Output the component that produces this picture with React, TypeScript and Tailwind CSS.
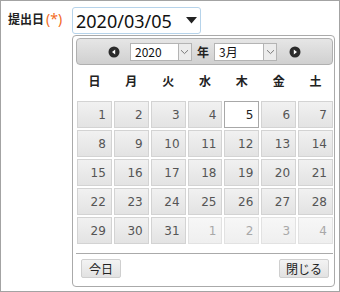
import React from 'react';

// --- Calendar data (March 2020) ---
const weekDays = ['日', '月', '火', '水', '木', '金', '土'];

type Day = { n: number; other?: boolean; selected?: boolean };

const weeks: Day[][] = [
  [1, 2, 3, 4, 5, 6, 7].map((n) => ({ n, selected: n === 5 })),
  [8, 9, 10, 11, 12, 13, 14].map((n) => ({ n })),
  [15, 16, 17, 18, 19, 20, 21].map((n) => ({ n })),
  [22, 23, 24, 25, 26, 27, 28].map((n) => ({ n })),
  [
    { n: 29 },
    { n: 30 },
    { n: 31 },
    { n: 1, other: true },
    { n: 2, other: true },
    { n: 3, other: true },
    { n: 4, other: true },
  ],
];

const jp = "font-['Noto_Sans_CJK_JP',sans-serif]";

const CircleArrow = ({ dir }: { dir: 'prev' | 'next' }) => (
  <svg width="12" height="12" viewBox="0 0 12 12">
    <circle cx="6" cy="6" r="5.5" fill="#2b2b2b" />
    {dir === 'prev' ? (
      <path d="M7.2 3.4 L4 6 L7.2 8.6 Z" fill="#fff" />
    ) : (
      <path d="M4.8 3.4 L8 6 L4.8 8.6 Z" fill="#fff" />
    )}
  </svg>
);

const Chevron = () => (
  <span className="flex items-center justify-center w-[13px] h-full border-l border-[#b4b4b4] bg-[#ececec]">
    <svg width="9" height="6" viewBox="0 0 9 6">
      <path d="M1 1.2 L4.5 4.6 L8 1.2" fill="none" stroke="#7a7a7a" strokeWidth="1" />
    </svg>
  </span>
);

const MiniSelect = ({ value, width }: { value: string; width: string }) => (
  <div className={`flex items-stretch h-[18px] bg-white border border-[#b4b4b4] ${width}`}>
    <span className={`flex-1 pl-[4px] text-[12px] leading-[16px] text-[#111] ${jp}`}>{value}</span>
    <Chevron />
  </div>
);

const App: React.FC = () => {
  return (
    <div className={`w-[340px] h-[292px] bg-white border border-[#a3a3a3] flex pt-[6px] ${jp}`}>
      {/* Label */}
      <div className="w-[71px] pl-[7px] pt-[3px] text-[12px] leading-[18px] font-bold text-[#222] whitespace-nowrap">
        提出日<span className="font-normal text-[14px] text-[#f26b1d] ml-[2px] font-['Noto_Sans',sans-serif]">(*)</span>
      </div>

      <div className="flex flex-col">
        {/* Date input */}
        <div className="w-[129px] h-[27px] border border-[#b6d3ea] rounded-[3px] flex items-center pl-[3px] pr-[2px] bg-white">
          <span className="flex-1 text-[18px] leading-[24px] text-[#111] font-['Noto_Sans',sans-serif]">2020/03/05</span>
          <svg width="11" height="7" viewBox="0 0 11 7" className="mr-[1px]">
            <path d="M0 0 L11 0 L5.5 6.5 Z" fill="#222" />
          </svg>
        </div>

        {/* Datepicker popup */}
        <div className="w-[263px] h-[252px] mt-[1px] border border-[#aaaaaa] rounded-[4px] bg-white pl-[3px] pr-[1px] pt-[2px] flex flex-col">
          {/* Header */}
          <div className="h-[27px] rounded-[4px] border border-[#b0b0b0] bg-gradient-to-b from-[#e6e6e6] to-[#d0d0d0] flex items-center justify-center">
            <CircleArrow dir="prev" />
            <div className="ml-[10px]">
              <MiniSelect value="2020" width="w-[62px]" />
            </div>
            <span className="mx-[5px] text-[12px] font-bold text-[#222]">年</span>
            <MiniSelect value="3月" width="w-[63px]" />
            <div className="ml-[12px]">
              <CircleArrow dir="next" />
            </div>
          </div>

          {/* Week day names */}
          <div className="grid grid-cols-7 gap-x-[2px] h-[31px] items-center pl-[1px]">
            {weekDays.map((d) => (
              <span key={d} className="text-center text-[12px] font-bold text-[#222]">
                {d}
              </span>
            ))}
          </div>

          {/* Days */}
          <div className="grid grid-cols-7 gap-x-[2px] gap-y-[2px] mt-[5px] pl-[1px]">
            {weeks.flat().map((d, i) => (
              <div
                key={i}
                className={`h-[27px] flex items-center justify-end pr-[5px] text-[12px] font-['DejaVu_Sans',sans-serif] border ${
                  d.selected
                    ? 'bg-white border-[#a8a8a8] text-[#212121]'
                    : d.other
                    ? 'bg-gradient-to-b from-[#f7f7f7] to-[#efefef] border-[#e2e2e2] text-[#a8a8a8]'
                    : 'bg-gradient-to-b from-[#f1f1f1] to-[#e3e3e3] border-[#d3d3d3] text-[#555]'
                }`}
              >
                {d.n}
              </div>
            ))}
          </div>

          {/* Button pane */}
          <div className="mt-[9px] border-t border-[#aaaaaa] flex justify-between pt-[5px] pl-[5px] pr-[4px]">
            <button className="h-[19px] px-[7px] text-[12px] leading-[17px] text-[#222] border border-[#cfcfcf] rounded-[2px] bg-gradient-to-b from-[#f3f3f3] to-[#e2e2e2]">
              今日
            </button>
            <button className="h-[19px] px-[6px] text-[12px] leading-[17px] text-[#222] border border-[#cfcfcf] rounded-[2px] bg-gradient-to-b from-[#f3f3f3] to-[#e2e2e2]">
              閉じる
            </button>
          </div>
        </div>
      </div>
    </div>
  );
};

export default App;
